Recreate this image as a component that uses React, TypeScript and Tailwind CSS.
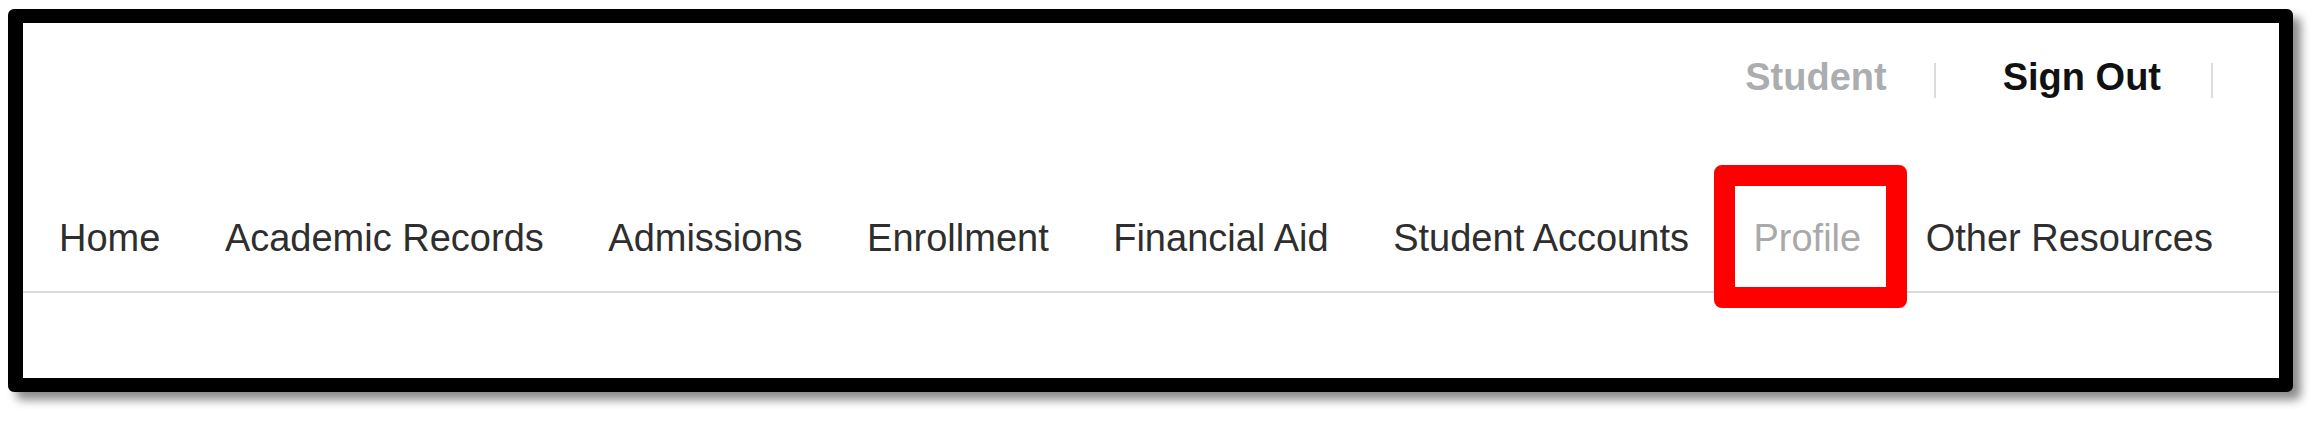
const navItems = [
  'Home',
  'Academic Records',
  'Admissions',
  'Enrollment',
  'Financial Aid',
  'Student Accounts',
  'Profile',
  'Other Resources',
]

function TopBar() {
  return (
    <div className="flex justify-end pt-[35px] pr-[66px] text-[38px] font-bold leading-[38px]">
      <span className="text-[#abadb0]">Student</span>
      <span className="ml-[47px] mt-[5px] h-[35px] w-[2px] bg-[#dcdcdc]" />
      <span className="ml-[67px] text-[#111111]">Sign Out</span>
      <span className="ml-[50px] mt-[5px] h-[35px] w-[2px] bg-[#dcdcdc]" />
    </div>
  )
}

function NavBar() {
  return (
    <nav className="mt-[121px] border-b-2 border-[#dadada] pb-[34px] pl-[36px]">
      <ul className="flex gap-[64.5px] text-[38px] leading-[38px] text-[#2e2e2e]">
        {navItems.map((item) =>
          item === 'Profile' ? (
            <li key={item} className="relative text-[#a9a9a9]">
              {item}
              <span className="absolute -top-[54px] -bottom-[51px] -left-[39px] -right-[46px] rounded-[8px] border-[21px] border-[#ff0000]" />
            </li>
          ) : (
            <li key={item}>{item}</li>
          )
        )}
      </ul>
    </nav>
  )
}

export default function App() {
  return (
    <div className="h-[421px] w-[2322px] bg-white pt-[9px] pl-[8px] font-['Liberation_Sans',Arial,sans-serif]">
      <div className="h-[383px] w-[2285px] rounded-[6px] border-[14px] border-l-[15px] border-black bg-white shadow-[8px_8px_10px_rgba(0,0,0,0.45)]">
        <TopBar />
        <NavBar />
      </div>
    </div>
  )
}
